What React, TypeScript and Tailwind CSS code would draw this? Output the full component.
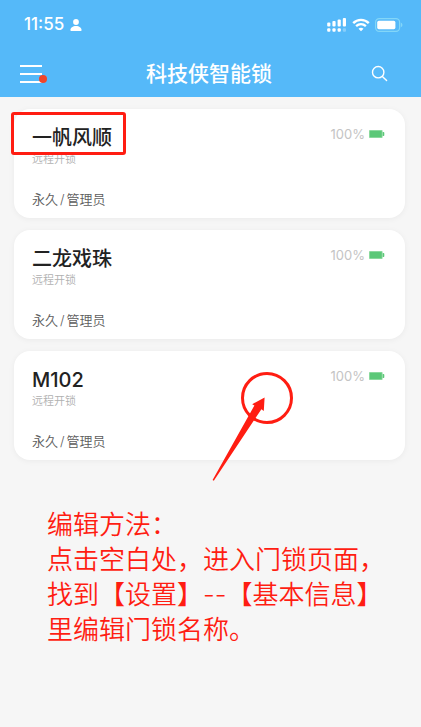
import type { ReactNode } from "react";

// --- DATA ---
type Lock = {
  id: number;
  name: string;
  battery: number;
  mark?: "name" | "blank";
};

const locks: Lock[] = [
  { id: 1, name: "一帆风顺", battery: 100, mark: "name" },
  { id: 2, name: "二龙戏珠", battery: 100 },
  { id: 3, name: "M102", battery: 100, mark: "blank" },
];

// --- ICONS ---
function PersonIcon() {
  return (
    <svg width="12" height="12" viewBox="0 0 12 12" fill="currentColor" aria-hidden="true">
      <circle cx="6" cy="3" r="2.9" />
      <path d="M0.4 11.2c0-2.7 2.4-4.3 5.6-4.3s5.6 1.6 5.6 4.3c0 .5-.3.8-.8.8H1.2c-.5 0-.8-.3-.8-.8z" />
    </svg>
  );
}

function SignalIcon() {
  return (
    <svg width="20" height="14" viewBox="0 0 20 14" fill="currentColor" aria-hidden="true">
      <rect x="0.2" y="4.4" width="3.2" height="4" rx="1" />
      <rect x="5.4" y="3" width="3.2" height="5.4" rx="1" />
      <rect x="10.6" y="1.6" width="3.2" height="6.8" rx="1" />
      <rect x="15.8" y="0" width="3.2" height="8.4" rx="1" />
      <rect x="0.2" y="10.2" width="3.2" height="3.6" rx="1" />
      <rect x="5.4" y="10.2" width="3.2" height="3.6" rx="1" />
      <rect x="10.6" y="10.2" width="3.2" height="3.6" rx="1" />
      <rect x="15.8" y="10.2" width="3.2" height="3.6" rx="1" opacity="0.3" />
    </svg>
  );
}

function WifiIcon() {
  return (
    <svg width="18" height="14" viewBox="0 0 18 14" fill="none" stroke="currentColor" aria-hidden="true">
      <path d="M1.2 5.2C5.6 0.8 12.4 0.8 16.8 5.2" strokeWidth="2.4" />
      <path d="M4.1 8.2C7 5.5 11 5.5 13.9 8.2" strokeWidth="2.3" />
      <path d="M9 13.2L6.5 10.7C8 9.5 10 9.5 11.5 10.7z" fill="currentColor" stroke="none" />
    </svg>
  );
}

function PhoneBatteryIcon() {
  return (
    <svg width="28" height="14" viewBox="0 0 28 14" aria-hidden="true">
      <rect x="0.6" y="0.6" width="24" height="12.8" rx="3.6" fill="none" stroke="#82d6f8" strokeWidth="1.2" />
      <rect x="2.2" y="2.8" width="18.2" height="8.4" rx="1.6" fill="#fff" />
      <path d="M25.8 4.8c1.2.4 1.6 1.2 1.6 2.2s-.4 1.8-1.6 2.2z" fill="#82d6f8" />
    </svg>
  );
}

function SearchIcon() {
  return (
    <svg width="17" height="17" viewBox="0 0 17 17" fill="none" stroke="currentColor" strokeWidth="1.4" strokeLinecap="round" aria-hidden="true">
      <circle cx="7.2" cy="7.2" r="5.7" />
      <path d="M11.4 11.4L15.6 15.6" />
    </svg>
  );
}

function LockBatteryIcon() {
  return (
    <svg width="16" height="8" viewBox="0 0 16 8" aria-hidden="true">
      <rect x="0" y="0" width="13.6" height="8" rx="0.8" fill="#91dba3" />
      <rect x="0.9" y="0.9" width="11.8" height="6.2" fill="#5cc878" />
      <path d="M13.6 2h.9c.5 0 .8.3.8.8v2.4c0 .5-.3.8-.8.8h-.9z" fill="#5cc878" />
    </svg>
  );
}

// circle with an arrow pointing at the empty part of the card
function TapMark() {
  return (
    <svg
      className="pointer-events-none absolute top-5 right-[111px]"
      width="82"
      height="112"
      viewBox="0 0 82 112"
      aria-hidden="true"
    >
      <circle cx="55" cy="27" r="24.5" fill="none" stroke="#ff1d12" strokeWidth="3" />
      <path d="M52.6 26.4L40.2 33.2L42.4 34.6L0.6 109L1.8 109.8L49.4 38.2L51.8 40z" fill="#ff1d12" />
    </svg>
  );
}

// --- COMPONENTS ---
function StatusBar() {
  return (
    <div className="flex h-[50px] items-center justify-between pr-[18px] pl-6">
      <div className="flex items-center gap-[6px]">
        <span className="text-[17px] font-medium">11:55</span>
        <PersonIcon />
      </div>
      <div className="flex items-center gap-[5px]">
        <SignalIcon />
        <WifiIcon />
        <PhoneBatteryIcon />
      </div>
    </div>
  );
}

function NavBar() {
  return (
    <div className="flex h-[47px] items-center justify-between pr-[33px] pl-5">
      <button type="button" aria-label="菜单" className="relative flex w-[27px] flex-col gap-[6px]">
        <span className="h-[2px] w-[22px] bg-white" />
        <span className="h-[2px] w-[22px] bg-white" />
        <span className="h-[2px] w-[22px] bg-white" />
        <span className="absolute right-0 bottom-0 size-2 rounded-full bg-[#f0452a]" />
      </button>
      <h1 className="text-[21px] font-medium">科技侠智能锁</h1>
      <button type="button" aria-label="搜索">
        <SearchIcon />
      </button>
    </div>
  );
}

function LockCard({ lock, children }: { lock: Lock; children?: ReactNode }) {
  return (
    <li className="relative rounded-2xl bg-white px-[18px] pt-4 pb-[10px] shadow-[0_1px_6px_rgba(0,0,0,0.05)]">
      <div className="flex items-start justify-between">
        <h2 className="text-xl leading-[26px] font-medium text-[#222222]">{lock.name}</h2>
        <div className="flex items-center gap-1 pr-[2px] text-[#c4c4c4]">
          <span className="text-[13px] leading-[18px]">{lock.battery}%</span>
          <LockBatteryIcon />
        </div>
      </div>
      <p className="text-[11px] leading-4 font-[350] text-[#b0b0b0]">远程开锁</p>
      <p className="mt-[23px] text-[13px] leading-[18px] font-[350] text-[#5c5c5c]">
        永久<span className="mx-[2px]">/</span>管理员
      </p>
      {children}
    </li>
  );
}

// --- MAIN COMPONENT ---
export default function App() {
  return (
    <div className="min-h-screen bg-[#f6f6f6] font-['Inter','Noto_Sans_CJK_SC',sans-serif]">
      <header className="bg-[#55b9f9] text-white">
        <StatusBar />
        <NavBar />
      </header>

      <main>
        <ul className="flex flex-col gap-3 pt-3 pr-4 pl-[14px]">
          {locks.map((lock) => (
            <LockCard key={lock.id} lock={lock}>
              {lock.mark === "name" && (
                <span className="pointer-events-none absolute top-[3px] -left-[3px] h-[43px] w-[115px] rounded-[3px] border-3 border-[#ff1d12]" />
              )}
              {lock.mark === "blank" && <TapMark />}
            </LockCard>
          ))}
        </ul>

        <p className="pt-[47px] pl-[47px] text-[26px] leading-[35px] font-[350] whitespace-nowrap text-[#ff1d12]">
          编辑方法：
          <br />
          点击空白处，进入门锁页面，
          <br />
          找到【设置】--【基本信息】
          <br />
          里编辑门锁名称。
        </p>
      </main>
    </div>
  );
}
